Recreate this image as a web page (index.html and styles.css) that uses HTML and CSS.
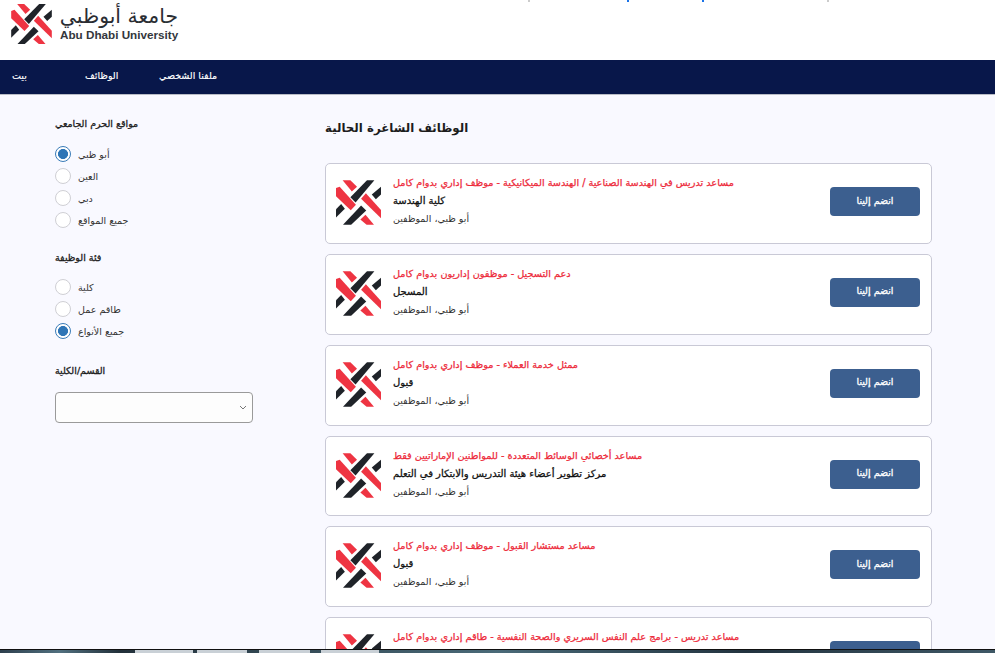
FILE: index.html
```html
<!DOCTYPE html>
<html lang="ar">
<head>
<meta charset="utf-8">
<title>الوظائف الشاغرة الحالية</title>
<link rel="stylesheet" href="styles.css">
</head>
<body>
<svg class="defs" width="0" height="0" aria-hidden="true">
  <symbol id="mark" viewBox="33 12 122 120">
    <g fill="#ee3442">
      <polygon points="51,12 72,12 90,29 76,42"/>
      <polygon points="33,33 43,29 87,78 73,93 33,55"/>
      <polygon points="101,62 114,47 155,92 155,115"/>
      <polygon points="99,118 113,105 136,132 116,132"/>
    </g>
    <g fill="#1f2329">
      <polygon points="72,58 117,12 137,12 86,72"/>
      <polygon points="130,50 155,29 155,50 141,63"/>
      <polygon points="33,90 47,76 57,89 33,113"/>
      <polygon points="52,132 101,80 115,94 74,132"/>
    </g>
  </symbol>
</svg>

<div class="ticks" aria-hidden="true">
  <i class="tick grey t1"></i><i class="tick blue t2"></i><i class="tick blue t3"></i><i class="tick grey t4"></i>
</div>

<header class="brand">
  <svg class="brand-mark"><use href="#mark"/></svg>
  <div class="brand-text">
    <div class="brand-ar" dir="rtl">جامعة أبوظبي</div>
    <div class="brand-en">Abu Dhabi University</div>
  </div>
</header>

<nav class="nav">
  <a class="nav-item" dir="rtl">بيت</a>
  <a class="nav-item" dir="rtl">الوظائف</a>
  <a class="nav-item" dir="rtl">ملفنا الشخصي</a>
</nav>

<div class="layout">
  <aside class="filters">
    <h3 class="filter-head first" dir="rtl">مواقع الحرم الجامعي</h3>
    <label class="radio"><input type="radio" name="loc" checked><span dir="rtl">أبو ظبي</span></label>
    <label class="radio"><input type="radio" name="loc"><span dir="rtl">العين</span></label>
    <label class="radio"><input type="radio" name="loc"><span dir="rtl">دبي</span></label>
    <label class="radio"><input type="radio" name="loc"><span dir="rtl">جميع المواقع</span></label>

    <h3 class="filter-head second" dir="rtl">فئة الوظيفة</h3>
    <label class="radio"><input type="radio" name="cat"><span dir="rtl">كلية</span></label>
    <label class="radio"><input type="radio" name="cat"><span dir="rtl">طاقم عمل</span></label>
    <label class="radio"><input type="radio" name="cat" checked><span dir="rtl">جميع الأنواع</span></label>

    <h3 class="filter-head third" dir="rtl">القسم/الكلية</h3>
    <div class="select">
      <svg class="chev" viewBox="0 0 8 5" width="8" height="5"><path d="M1 1l3 3 3-3" fill="none" stroke="#777" stroke-width="1"/></svg>
    </div>
  </aside>

  <main class="jobs">
    <h1 class="jobs-title" dir="rtl">الوظائف الشاغرة الحالية</h1>

    <article class="card">
      <svg class="card-mark"><use href="#mark"/></svg>
      <div class="card-body">
        <div class="job-title" dir="rtl">مساعد تدريس في الهندسة الصناعية / الهندسة الميكانيكية - موظف إداري بدوام كامل</div>
        <div class="job-dept" dir="rtl">كلية الهندسة</div>
        <div class="job-loc" dir="rtl">أبو ظبي، الموظفين</div>
      </div>
      <button class="apply" dir="rtl">انضم إلينا</button>
    </article>

    <article class="card">
      <svg class="card-mark"><use href="#mark"/></svg>
      <div class="card-body">
        <div class="job-title" dir="rtl">دعم التسجيل - موظفون إداريون بدوام كامل</div>
        <div class="job-dept" dir="rtl">المسجل</div>
        <div class="job-loc" dir="rtl">أبو ظبي، الموظفين</div>
      </div>
      <button class="apply" dir="rtl">انضم إلينا</button>
    </article>

    <article class="card">
      <svg class="card-mark"><use href="#mark"/></svg>
      <div class="card-body">
        <div class="job-title" dir="rtl">ممثل خدمة العملاء - موظف إداري بدوام كامل</div>
        <div class="job-dept" dir="rtl">قبول</div>
        <div class="job-loc" dir="rtl">أبو ظبي، الموظفين</div>
      </div>
      <button class="apply" dir="rtl">انضم إلينا</button>
    </article>

    <article class="card">
      <svg class="card-mark"><use href="#mark"/></svg>
      <div class="card-body">
        <div class="job-title" dir="rtl">مساعد أخصائي الوسائط المتعددة - للمواطنين الإماراتيين فقط</div>
        <div class="job-dept" dir="rtl">مركز تطوير أعضاء هيئة التدريس والابتكار في التعلم</div>
        <div class="job-loc" dir="rtl">أبو ظبي، الموظفين</div>
      </div>
      <button class="apply" dir="rtl">انضم إلينا</button>
    </article>

    <article class="card">
      <svg class="card-mark"><use href="#mark"/></svg>
      <div class="card-body">
        <div class="job-title" dir="rtl">مساعد مستشار القبول - موظف إداري بدوام كامل</div>
        <div class="job-dept" dir="rtl">قبول</div>
        <div class="job-loc" dir="rtl">أبو ظبي، الموظفين</div>
      </div>
      <button class="apply" dir="rtl">انضم إلينا</button>
    </article>

    <article class="card">
      <svg class="card-mark"><use href="#mark"/></svg>
      <div class="card-body">
        <div class="job-title" dir="rtl">مساعد تدريس - برامج علم النفس السريري والصحة النفسية - طاقم إداري بدوام كامل</div>
      </div>
      <button class="apply" aria-label="انضم إلينا"></button>
    </article>
  </main>
</div>

<div class="taskbar" aria-hidden="true">
  <i class="task t-a"></i><i class="task t-b"></i><i class="task t-c"></i><i class="task t-d"></i>
</div>
</body>
</html>
```
FILE: styles.css
```css
* { box-sizing: border-box; }
html, body { margin: 0; height: 653px; overflow: hidden; }
body {
  position: relative;
  background: #f9f9ff;
  font-family: "DejaVu Sans", "Noto Sans", sans-serif;
  color: #222;
  font-size: 10px;
}
.defs { position: absolute; }

.ticks { position: absolute; inset: 0 0 auto 0; height: 2px; }
.tick { position: absolute; top: 0; width: 2px; height: 2px; }
.tick.grey { background: #ccc; }
.tick.blue { background: #1a73e8; }
.t1 { left: 528px; } .t2 { left: 627px; } .t3 { left: 702px; } .t4 { left: 827px; }

.brand {
  height: 60px;
  background: #fff;
  display: flex;
  align-items: flex-start;
  padding: 4px 0 0 11px;
}
.brand-mark { width: 41px; height: 40px; flex: none; }
.brand-text { margin-left: 8px; width: 118px; }
.brand-ar { font-size: 20.4px; line-height: 24px; color: #2a2d33; text-align: left; height: 24px; white-space: nowrap; }
.brand-en { font-family: "Liberation Sans", sans-serif; font-size: 11.7px; font-weight: 700; line-height: 14px; color: #33373d; white-space: nowrap; }

.nav {
  height: 35px;
  background: #08174a;
  border-bottom: 1px solid #b9bcc6;
  display: grid;
  grid-template-columns: 73px 74px auto;
  justify-content: start;
  align-items: center;
  padding: 0 0 4px 12px;
}
.nav-item { color: #fff; font-size: 9.5px; justify-self: start; -webkit-text-stroke: 0.15px #fff; }

.layout { display: flex; align-items: flex-start; }
.filters { width: 325px; flex: none; padding: 22px 0 0 55px; }
.filter-head { margin: 0; font-size: 9.5px; font-weight: 400; -webkit-text-stroke: 0.3px #1c1c1c; color: #1c1c1c; line-height: 14px; text-align: left; }
.filter-head.first { margin-bottom: 12px; }
.filter-head.second { margin-top: 20px; margin-bottom: 11px; }
.filter-head.third { margin-top: 22px; margin-bottom: 14px; }

.radio { display: flex; align-items: center; gap: 7px; height: 22px; font-size: 9.5px; color: #333; }
.radio input {
  appearance: none;
  width: 16px; height: 16px; margin: 0;
  border: 1px solid #cfcfd4;
  border-radius: 50%;
  background: #fff;
  flex: none;
}
.radio input:checked {
  border-color: #3a7cb8;
  background: radial-gradient(circle, #2e75b6 0 4.7px, #fff 5.3px);
}

.select {
  width: 198px; height: 31px;
  background: #fdfdfd;
  border: 1px solid #9a9a9a;
  border-radius: 4px;
  display: flex;
  align-items: center;
  justify-content: flex-end;
  padding-right: 5px;
}

.jobs { width: 607px; flex: none; padding-top: 23px; }
.jobs-title { margin: 0 0 25.2px; font-size: 11.8px; font-weight: 700; line-height: 20px; color: #1c1c1c; text-align: left; }

.card {
  height: 80.8px;
  margin-bottom: 10px;
  background: #fff;
  border: 1px solid #c9c9d6;
  border-radius: 5px;
  display: flex;
  align-items: flex-start;
  padding: 0 11px 0 10px;
}
.card-mark { width: 45px; height: 45px; flex: none; margin-top: 16px; }
.card-body { flex: 1; min-width: 0; margin-left: 12px; padding-top: 10px; text-align: left; }
.job-title { color: #ed2939; font-size: 9.7px; -webkit-text-stroke: 0.25px #ed2939; line-height: 18px; }
.job-dept { color: #111; font-size: 10px; -webkit-text-stroke: 0.3px #111; line-height: 17px; }
.job-loc { color: #333; font-size: 9.5px; line-height: 19px; }
.job-title, .job-dept, .job-loc { width: fit-content; white-space: nowrap; }

.apply {
  width: 90px; height: 29px; flex: none;
  margin-top: 23px;
  padding: 0 0 3px;
  border: 0; border-radius: 4px;
  background: #3c5f8f;
  color: #fff;
  font: 400 9.5px "DejaVu Sans", sans-serif;
  -webkit-text-stroke: 0.3px #fff;
}

.taskbar {
  position: absolute; left: 0; right: 0; bottom: 0; height: 4px;
  border-top: 1px solid #111;
  background: linear-gradient(90deg, #2d3f4d, #51707f 6%, #22303a 12%, #4a6a78 50%, #22333f 75%, #3f5866);
}
.task { position: absolute; top: 0; height: 3px; background: #c9d0d6; }
.t-a { left: 135px; width: 58px; } .t-b { left: 197px; width: 50px; }
.t-c { left: 259px; width: 51px; } .t-d { left: 321px; width: 58px; }
```
